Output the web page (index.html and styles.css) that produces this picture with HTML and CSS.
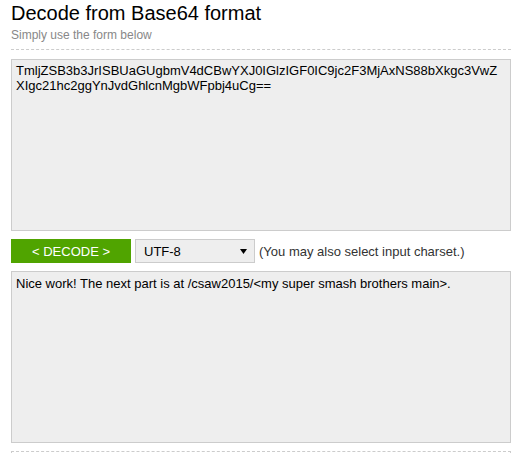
FILE: index.html
```html
<!DOCTYPE html>
<html>
<head>
<meta charset="utf-8">
<title>Decode from Base64 format</title>
<link rel="stylesheet" href="styles.css">
</head>
<body>
<div class="page">
  <h1 class="title">Decode from Base64 format</h1>
  <p class="subtitle">Simply use the form below</p>
  <div class="divider"></div>
  <form class="form">
    <textarea class="box input-box" spellcheck="false">TmljZSB3b3JrISBUaGUgbmV4dCBwYXJ0IGlzIGF0IC9jc2F3MjAxNS88bXkgc3VwZXIgc21hc2ggYnJvdGhlcnMgbWFpbj4uCg==</textarea>
    <div class="controls">
      <button type="button" class="decode-btn">&lt; DECODE &gt;</button>
      <div class="select">
        <span class="select-value">UTF-8</span>
        <svg class="select-arrow" width="7" height="5" viewBox="0 0 7 5"><polygon points="0,0 7,0 3.5,5" fill="#000"/></svg>
      </div>
      <span class="hint">(You may also select input charset.)</span>
    </div>
    <textarea class="box output-box" spellcheck="false">Nice work! The next part is at /csaw2015/&lt;my super smash brothers main&gt;.</textarea>
  </form>
  <div class="footer-box"></div>
</div>
</body>
</html>
```

FILE: styles.css
```css
html, body {
  margin: 0;
  padding: 0;
  background: #fff;
}
body {
  font-family: "Liberation Sans", Arial, sans-serif;
  overflow: hidden;
}
.page {
  width: 500px;
  padding: 2px 0 0 11px;
}
.title {
  margin: 0;
  font-size: 20px;
  line-height: 23px;
  font-weight: normal;
  color: #000;
}
.subtitle {
  margin: 3px 0 0;
  font-size: 12px;
  line-height: 14px;
  color: #888;
}
.divider {
  margin-top: 7px;
  border-top: 1px dashed #ccc;
}
.form {
  margin: 9px 0 0;
  display: flex;
  flex-direction: column;
  gap: 8px;
}
.box {
  display: block;
  box-sizing: border-box;
  width: 500px;
  height: 172px;
  margin: 0;
  padding: 3px 8px 3px 4px;
  border: 1px solid #ccc;
  background: #eee;
  font-family: "Liberation Sans", Arial, sans-serif;
  font-size: 13px;
  line-height: 15px;
  color: #000;
  resize: none;
  overflow: hidden;
  outline: none;
}
.output-box {
  padding-top: 4px;
}
.controls {
  display: flex;
  align-items: center;
  gap: 4px;
  height: 24px;
}
.decode-btn {
  box-sizing: border-box;
  width: 120px;
  height: 24px;
  margin: 0;
  padding: 0;
  border: 0;
  background: #50a400;
  color: #fff;
  font-family: "Liberation Sans", Arial, sans-serif;
  font-size: 13px;
}
.select {
  box-sizing: border-box;
  width: 120px;
  height: 24px;
  display: flex;
  align-items: center;
  justify-content: space-between;
  padding: 0 7px 0 8px;
  border: 1px solid #ccc;
  background: #eee;
  font-size: 13px;
  color: #000;
}
.select-arrow {
  display: block;
}
.hint {
  font-size: 13px;
  color: #333;
}
.footer-box {
  margin-top: 8px;
  height: 20px;
  border: 1px dashed #ccc;
  border-bottom: 0;
}
```
